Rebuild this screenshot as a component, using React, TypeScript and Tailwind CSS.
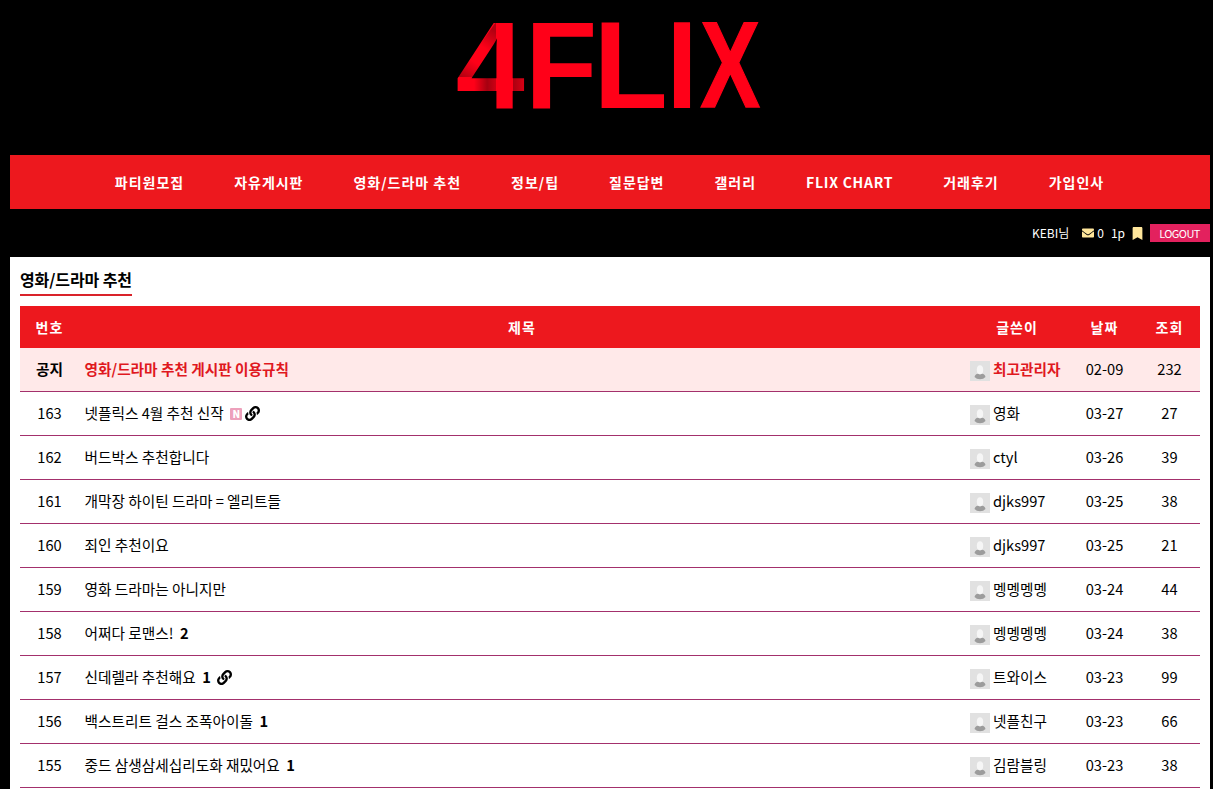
import { FaBookmark, FaEnvelope, FaLink } from "react-icons/fa";

type Post = {
  no: string;
  title: string;
  author: string;
  date: string;
  views: number;
  comments?: number;
  isNew?: boolean;
  hasLink?: boolean;
};

const menu = [
  "파티원모집",
  "자유게시판",
  "영화/드라마 추천",
  "정보/팁",
  "질문답변",
  "갤러리",
  "FLIX CHART",
  "거래후기",
  "가입인사",
];

const posts: Post[] = [
  { no: "163", title: "넷플릭스 4월 추천 신작", author: "영화", date: "03-27", views: 27, isNew: true, hasLink: true },
  { no: "162", title: "버드박스 추천합니다", author: "ctyl", date: "03-26", views: 39 },
  { no: "161", title: "개막장 하이틴 드라마 = 엘리트들", author: "djks997", date: "03-25", views: 38 },
  { no: "160", title: "죄인 추천이요", author: "djks997", date: "03-25", views: 21 },
  { no: "159", title: "영화 드라마는 아니지만", author: "멩멩멩멩", date: "03-24", views: 44 },
  { no: "158", title: "어쩌다 로맨스!", author: "멩멩멩멩", date: "03-24", views: 38, comments: 2 },
  { no: "157", title: "신데렐라 추천해요", author: "트와이스", date: "03-23", views: 99, comments: 1, hasLink: true },
  { no: "156", title: "백스트리트 걸스 조폭아이돌", author: "넷플친구", date: "03-23", views: 66, comments: 1 },
  { no: "155", title: "중드 삼생삼세십리도화 재밌어요", author: "김람블링", date: "03-23", views: 38, comments: 1 },
];

function Logo() {
  return (
    <svg width="344" height="155" viewBox="437 0 344 155" className="block overflow-visible" aria-label="4FLIX">
      <defs>
        <linearGradient id="diagonal" gradientUnits="userSpaceOnUse" x1="496" y1="32" x2="466" y2="80">
          <stop offset="0" stopColor="#000" stopOpacity="0.3" />
          <stop offset="0.35" stopColor="#000" stopOpacity="0" />
          <stop offset="0.65" stopColor="#000" stopOpacity="0" />
          <stop offset="1" stopColor="#000" stopOpacity="0.3" />
        </linearGradient>
        <linearGradient id="bar" gradientUnits="userSpaceOnUse" x1="474" y1="0" x2="496" y2="0">
          <stop offset="0" stopColor="#000" stopOpacity="0" />
          <stop offset="0.6" stopColor="#000" stopOpacity="0.35" />
          <stop offset="1" stopColor="#000" stopOpacity="0.2" />
        </linearGradient>
        <linearGradient id="tip" gradientUnits="userSpaceOnUse" x1="512" y1="0" x2="525" y2="0">
          <stop offset="0" stopColor="#000" stopOpacity="0.35" />
          <stop offset="1" stopColor="#000" stopOpacity="0.15" />
        </linearGradient>
      </defs>
      <g fill="#ff0018" fontFamily="'Liberation Sans', sans-serif" fontWeight="700" fontSize="124">
        <text transform="translate(455.7 108) scale(1 1)">4</text>
        <text transform="translate(525.2 108) scale(0.95 1)">F</text>
        <text transform="translate(593.6 108) scale(0.98 1)">L</text>
        <text transform="translate(666.6 108) scale(0.9 1)">I</text>
        <text transform="translate(700.2 107.4) scale(0.725 0.985)" stroke="#ff0018" strokeWidth="1.4">X</text>
      </g>
      {/* ribbon folds over the 4 */}
      <path d="M457 77 L496 22 V77 Z" fill="url(#diagonal)" />
      <rect x="457" y="77" width="39" height="14" fill="url(#bar)" />
      <rect x="513" y="76" width="13" height="15" fill="url(#tip)" />
    </svg>
  );
}

function Avatar() {
  return (
    <svg width="20" height="20" viewBox="0 0 20 20" className="mt-[5px] mr-[3px] shrink-0">
      <rect width="20" height="20" fill="#e1e1e1" />
      <path d="M4.5 16 Q5 12.6 10 12.6 Q15 12.6 15.5 16 Q13.5 18.2 10 18.2 Q6.5 18.2 4.5 16 Z" fill="#9c9c9c" />
      <ellipse cx="10" cy="8.8" rx="3.2" ry="4.6" fill="#f6f6f6" />
    </svg>
  );
}

export default function App() {
  return (
    <div className="h-screen w-[1213px] overflow-hidden bg-black pr-[3px] pl-[10px] font-['Noto_Sans_CJK_KR',sans-serif] text-black">
      <header className="flex h-[155px] justify-center pr-[2px]">
        <Logo />
      </header>

      <nav className="flex h-[54px] items-center justify-center bg-[#ed181e] pr-px">
        {menu.map((item) => (
          <a
            key={item}
            href="#"
            className={
              item === "FLIX CHART"
                ? "px-[25px] text-[14px] leading-[54px] font-bold tracking-[0.75px] whitespace-nowrap text-white"
                : "px-[25px] text-[14px] leading-[54px] font-bold tracking-[0.98px] whitespace-nowrap text-white"
            }
          >
            {item}
          </a>
        ))}
      </nav>

      <div className="flex h-[48px] items-center justify-end text-[12px] text-white">
        <span className="mr-[13px]">KEBI님</span>
        <FaEnvelope className="mr-[3px] text-[12px] text-[#ffe69b]" />
        <span className="mr-[7px]">0</span>
        <span className="mr-[6px]">1p</span>
        <FaBookmark className="mr-[6px] text-[13px] text-[#ffe69b]" />
        <a href="#" className="flex h-[18px] w-[60px] items-center justify-center bg-[#e3215e] pr-px text-[11px] tracking-[-0.6px]">
          LOGOUT
        </a>
      </div>

      <main className="h-[540px] bg-white px-[10px] pt-[7px]">
        <h2 className="inline-block h-[32px] border-b-2 border-[#d9232a] text-[16px] leading-[31px] font-bold tracking-[-0.1px]">
          영화/드라마 추천
        </h2>

        <div className="mt-[10px] text-[14.667px]">
          <div className="grid h-[42px] grid-cols-[60px_885px_105px_70px_60px] items-center bg-[#ed181e] pr-px text-center text-[14px] font-bold tracking-[1px] text-white">
            <span className="pr-px">번호</span>
            <span className="pr-px">제목</span>
            <span className="pr-px">글쓴이</span>
            <span className="pr-px">날짜</span>
            <span className="pr-px">조회</span>
          </div>

          <div className="grid h-[44px] grid-cols-[60px_885px_105px_70px_60px] items-center border-b border-b-[#a3306c] bg-[#ffe9e9] pb-[2px] text-center">
            <span className="pr-px font-bold">공지</span>
            <a href="#" className="pl-[4.5px] text-left font-bold text-[#e0181e]">
              영화/드라마 추천 게시판 이용규칙
            </a>
            <span className="flex items-center pl-[5px] font-bold text-[#e0181e]">
              <Avatar />
              최고관리자
            </span>
            <span className="pr-px">02-09</span>
            <span className="pr-px">232</span>
          </div>

          {posts.map((post) => (
            <div
              key={post.no}
              className="grid h-[44px] grid-cols-[60px_885px_105px_70px_60px] items-center border-b border-b-[#a3306c] pb-[2px] text-center"
            >
              <span className="pr-px">{post.no}</span>
              <a href="#" className="flex items-center pl-[4.5px]">
                {post.title}
                {post.comments && <b className="ml-[6.5px]">{post.comments}</b>}
                {post.isNew && (
                  <i className="mt-[2px] ml-[6.5px] flex size-[12px] items-center justify-center rounded-[1px] bg-[#eda0bb] text-[10px] leading-[12px] font-black text-white not-italic">
                    N
                  </i>
                )}
                {post.hasLink && (
                  <FaLink className={post.isNew ? "mt-[2px] ml-[3px] text-[15px]" : "mt-[2px] ml-[6px] text-[15px]"} />
                )}
              </a>
              <span className="flex items-center pl-[5px]">
                <Avatar />
                {post.author}
              </span>
              <span className="pr-px">{post.date}</span>
              <span className="pr-px">{post.views}</span>
            </div>
          ))}
        </div>
      </main>
    </div>
  );
}
